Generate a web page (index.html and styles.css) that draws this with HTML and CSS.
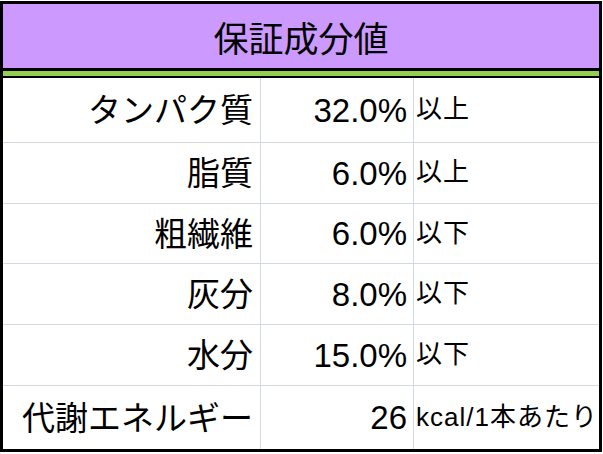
FILE: index.html
```html
<!DOCTYPE html>
<html lang="ja">
<head>
<meta charset="utf-8">
<title>保証成分値</title>
<link rel="stylesheet" href="styles.css">
</head>
<body>
<div class="sheet">
  <div class="title">保証成分値</div>
  <div class="rows">
    <div class="row r1"><div class="label">タンパク質</div><div class="num">32.0%</div><div class="unit">以上</div></div>
    <div class="row r2"><div class="label">脂質</div><div class="num">6.0%</div><div class="unit">以上</div></div>
    <div class="row r3"><div class="label">粗繊維</div><div class="num">6.0%</div><div class="unit">以下</div></div>
    <div class="row r4"><div class="label">灰分</div><div class="num">8.0%</div><div class="unit">以下</div></div>
    <div class="row r5"><div class="label">水分</div><div class="num">15.0%</div><div class="unit">以下</div></div>
    <div class="row r6"><div class="label">代謝エネルギー</div><div class="num">26</div><div class="unit">kcal/1本あたり</div></div>
  </div>
</div>
</body>
</html>
```

FILE: styles.css
```css
html, body {
  margin: 0;
  padding: 0;
  background: #ffffff;
}

body {
  width: 603px;
  height: 454px;
  overflow: hidden;
  padding-top: 1px;
  box-sizing: border-box;
  color: #000;
}

.sheet {
  width: 602px;
  height: 451px;
  box-sizing: border-box;
  border: 3px solid #000;
  display: flex;
  flex-direction: column;
}

.title {
  height: 67px;
  background: #cc99ff;
  display: flex;
  align-items: center;
  justify-content: center;
  font-family: "Noto Sans CJK JP", sans-serif;
  font-size: 35px;
  line-height: 1;
  border-bottom: 3px solid #000;
  box-shadow: 0 5px 0 #92d050, 0 7px 0 #000;
  margin-bottom: 7px;
  padding-top: 1px;
  box-sizing: border-box;
}

.rows {
  display: flex;
  flex-direction: column;
  flex: 1;
}

.row {
  display: grid;
  grid-template-columns: 258px 153px 1fr;
  border-bottom: 1px solid #d3d8e2;
  box-sizing: border-box;
}

.r1 { height: 65px; }
.r2 { height: 61px; }
.r3 { height: 60px; }
.r4 { height: 61px; }
.r5 { height: 61px; }
.r6 { flex: 1; border-bottom: none; }

.label, .num, .unit {
  display: flex;
  align-items: center;
  line-height: 1;
}

.label {
  justify-content: flex-end;
  padding-right: 7px;
  border-right: 1px solid #d3d8e2;
  font-family: "Noto Sans CJK JP", sans-serif;
  font-size: 33px;
  padding-bottom: 3px;
}

.num {
  justify-content: flex-end;
  padding-right: 6px;
  border-right: 1px solid #d3d8e2;
  font-family: "Liberation Sans", Arial, sans-serif;
  font-size: 33px;
}

.unit {
  padding-left: 2px;
  font-family: "Liberation Sans", "Noto Sans CJK JP", sans-serif;
  font-size: 26px;
  letter-spacing: 1px;
  padding-bottom: 2px;
}
```
